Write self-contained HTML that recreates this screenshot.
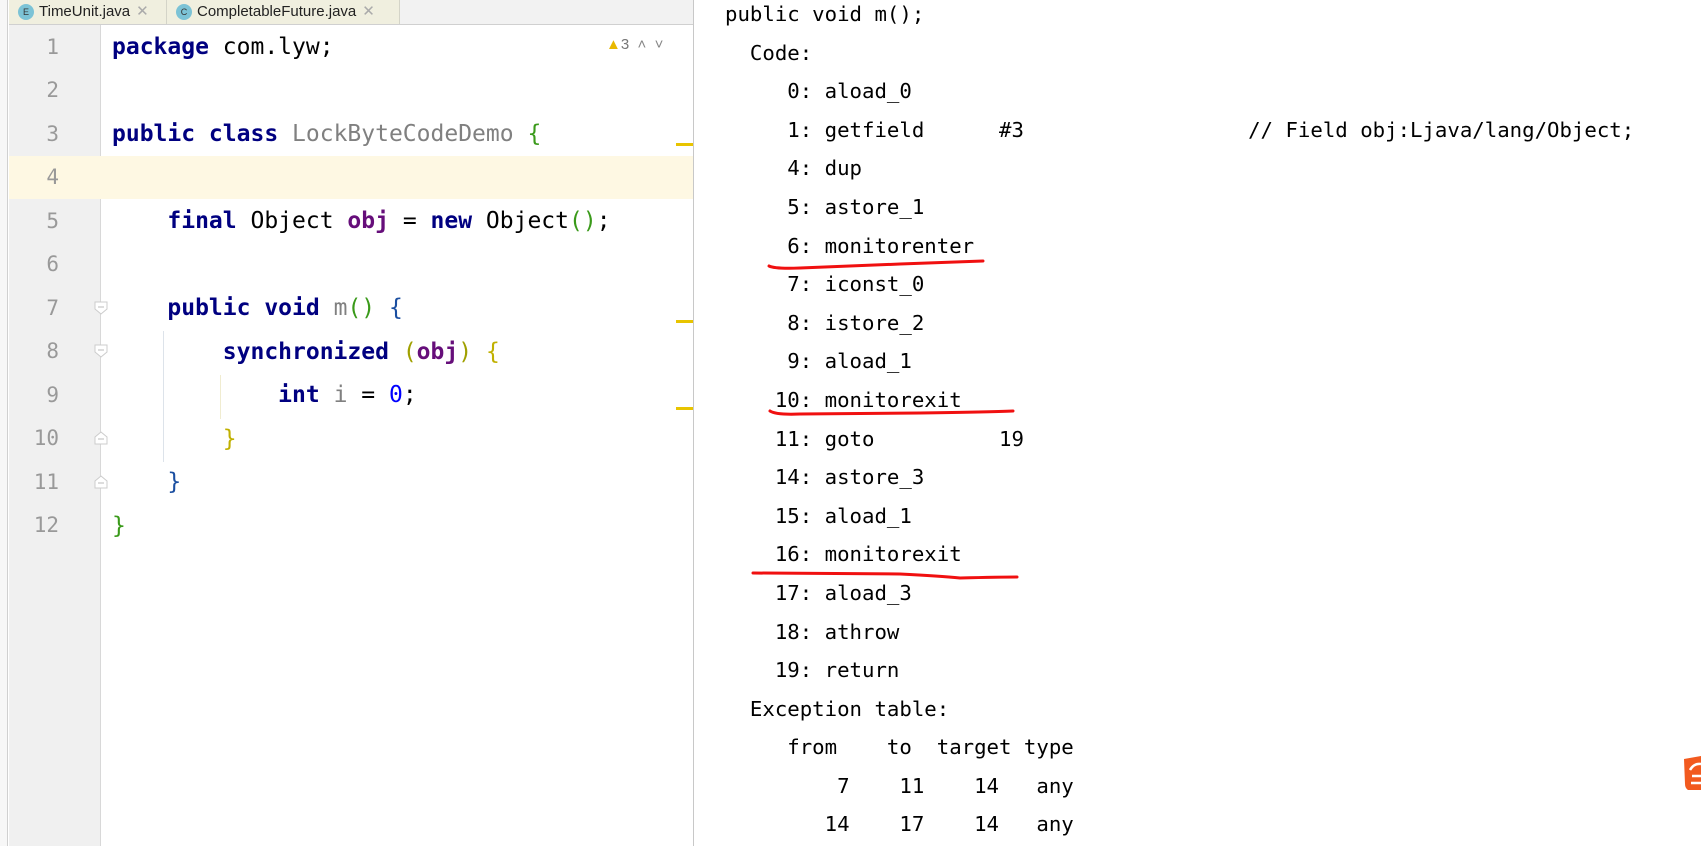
<!DOCTYPE html>
<html><head><meta charset="utf-8"><style>
*{margin:0;padding:0;box-sizing:border-box}
body{width:1701px;height:846px;overflow:hidden;background:#fff;position:relative;font-family:"DejaVu Sans Mono","Liberation Mono",monospace}
.side{position:absolute;left:0;top:0;width:8px;height:846px;background:#f7f7f7;border-right:1px solid #d0d0d0}
.tabs{position:absolute;left:9px;top:0;width:684px;height:25px;background:#f2f2f2;border-bottom:1px solid #d0d0d0}
.tab{position:absolute;top:0;height:24px;background:#f0efdf;border-right:1px solid #d4d4c8;font:15px "Liberation Sans",sans-serif;color:#222;line-height:24px;padding-left:30px}
.tab .ic{position:absolute;left:9px;top:4px;width:16px;height:16px;border-radius:50%;background:#7cc3d6;color:#333;font-size:9px;line-height:16px;text-align:center}
.tab .x{color:#aaa;margin-left:6px}
.gutter{position:absolute;left:9px;top:25px;width:92px;height:821px;background:#f0f0f0;border-right:1px solid #d8d8d8}
.editor{position:absolute;left:102px;top:25px;width:591px;height:821px;background:#fff}
.cur{position:absolute;left:9px;top:156px;width:684px;height:43px;background:#fef8e3}
.ln{position:absolute;left:9px;width:50px;text-align:right;font-size:21px;color:#999}
.code{position:absolute;left:112px;top:26px;font-size:23px;line-height:43.5px;white-space:pre;color:#000}
.k{color:#000080;font-weight:bold}.g{color:#808080}.p{color:#660e7a;font-weight:bold}.n{color:#0000ff}
.bg{color:#3a9a1a}.bb{color:#1a4ea0}.by{color:#c0b000}
.divr{position:absolute;left:693px;top:0;width:1px;height:846px;background:#c8c8c8}
.ym{position:absolute;left:676px;width:17px;height:3px;background:#e8c400}
.bc{position:absolute;left:725px;top:-5px;font-size:20.7px;line-height:38.6px;white-space:pre;color:#000}
.fold{position:absolute;left:94px;width:14px;height:14px}
.guide{position:absolute;width:1px;background:#dde3ea}
</style></head><body>
<div class="side"></div>
<div class="tabs"></div>
<div class="tab" style="left:9px;width:158px"><span class="ic">E</span>TimeUnit.java<span class="x">✕</span></div>
<div class="tab" style="left:167px;width:233px"><span class="ic">C</span>CompletableFuture.java<span class="x">✕</span></div>
<div class="gutter"></div>
<div class="editor"></div>
<div class="cur"></div>
<div style="position:absolute;top:26px;left:0">
<div class="ln" style="top:9px">1</div><div class="ln" style="top:52px">2</div><div class="ln" style="top:96px">3</div><div class="ln" style="top:139px">4</div><div class="ln" style="top:183px">5</div><div class="ln" style="top:226px">6</div><div class="ln" style="top:270px">7</div><div class="ln" style="top:313px">8</div><div class="ln" style="top:357px">9</div><div class="ln" style="top:400px">10</div><div class="ln" style="top:444px">11</div><div class="ln" style="top:487px">12</div>
</div>
<svg class="fold" style="top:301px" viewBox="0 0 14 14"><path d="M1 1H13V8L7 13L1 8Z" fill="#fff" stroke="#ccc"/><path d="M4 6H10" stroke="#bbb"/></svg>
<svg class="fold" style="top:344px" viewBox="0 0 14 14"><path d="M1 1H13V8L7 13L1 8Z" fill="#fff" stroke="#ccc"/><path d="M4 6H10" stroke="#bbb"/></svg>
<svg class="fold" style="top:431px" viewBox="0 0 14 14"><path d="M1 13H13V6L7 1L1 6Z" fill="#fff" stroke="#ccc"/><path d="M4 8H10" stroke="#bbb"/></svg>
<svg class="fold" style="top:475px" viewBox="0 0 14 14"><path d="M1 13H13V6L7 1L1 6Z" fill="#fff" stroke="#ccc"/><path d="M4 8H10" stroke="#bbb"/></svg>
<div class="guide" style="left:163px;top:331px;height:131px"></div>
<div class="guide" style="left:220px;top:375px;height:44px;background:#f0ecd0"></div>
<div class="code"><span class="k">package</span> com.lyw;

<span class="k">public class</span> <span class="g">LockByteCodeDemo</span> <span class="bg">{</span>

    <span class="k">final</span> Object <span class="p">obj</span> = <span class="k">new</span> Object<span class="bg">()</span>;

    <span class="k">public void</span> <span class="g">m</span><span class="bg">()</span> <span class="bb">{</span>
        <span class="k">synchronized</span> <span class="by" style="color:#a0a000">(</span><span class="p">obj</span><span class="by" style="color:#a0a000">)</span> <span class="by">{</span>
            <span class="k">int</span> <span class="g">i</span> = <span class="n">0</span>;
        <span class="by">}</span>
    <span class="bb">}</span>
<span class="bg">}</span></div>
<div style="position:absolute;left:606px;top:36px;font:15px 'Liberation Sans',sans-serif;color:#777"><span style="color:#e8b800">▲</span>3 &nbsp;<span style="color:#888">˄ &nbsp;˅</span></div>
<div class="ym" style="top:143px"></div><div class="ym" style="top:320px"></div><div class="ym" style="top:407px"></div>
<div class="divr"></div>
<div class="bc">public void m();
  Code:
     0: aload_0
     1: getfield      #3                  // Field obj:Ljava/lang/Object;
     4: dup
     5: astore_1
     6: monitorenter
     7: iconst_0
     8: istore_2
     9: aload_1
    10: monitorexit
    11: goto          19
    14: astore_3
    15: aload_1
    16: monitorexit
    17: aload_3
    18: athrow
    19: return
  Exception table:
     from    to  target type
         7    11    14   any
        14    17    14   any</div>
<svg style="position:absolute;left:0;top:0" width="1701" height="846">
<path d="M769 266 Q775 269 800 268 L900 264 Q960 262 983 261" stroke="#f01010" stroke-width="3" fill="none" stroke-linecap="round"/>
<path d="M770 411 Q776 415 800 414 L920 413 Q990 412 1013 411" stroke="#f01010" stroke-width="3" fill="none" stroke-linecap="round"/>
<path d="M753 573 L900 574 Q940 576 960 578 Q1000 577 1017 577" stroke="#f01010" stroke-width="3" fill="none" stroke-linecap="round"/>
<path d="M1684 759 L1701 756 V790 L1688 790 Q1685 788 1685 784 Z" fill="#f25a1f"/>
<path d="M1690 770 Q1694 763 1701 764 M1692 776 H1701 M1691 783 H1701" stroke="#fff" stroke-width="2.5" fill="none"/>
</svg>
</body></html>
